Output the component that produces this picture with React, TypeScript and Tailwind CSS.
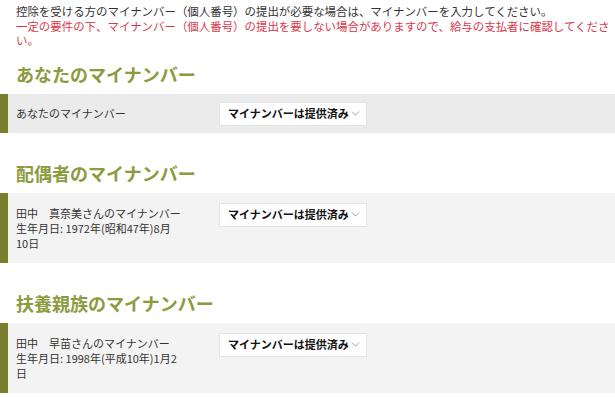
import { ChevronDown } from "lucide-react";

type Row = {
	lines: string[];
	first?: boolean;
};

const MyNumberRow = ({ lines, first }: Row) => {
	return (
		<div className={`flex border-l-8 border-[#7a7e2c] ${first ? "bg-[#ebebeb] items-center pt-2 pb-[7px]" : "bg-[#f3f3f3] items-start pt-[13px] pb-3"}`}>
			<div className="w-[211px] pl-2 text-[11px] leading-[15px] text-[#333]">
				{lines.map((l) => (
					<div key={l}>{l}</div>
				))}
			</div>
			<div
				className={`flex h-6 w-[148px] items-center justify-between bg-white border border-[#e4e4e4] pl-2 pr-1 ${first ? "" : "-mt-[3px]"}`}
			>
				<span className="text-[11px] font-bold text-[#111]">マイナンバーは提供済み</span>
				<ChevronDown size={13} strokeWidth={1.3} className="text-[#777]" />
			</div>
		</div>
	);
};

const App = () => {
	return (
		<div className="w-[615px] h-[397px] overflow-hidden bg-white" style={{ fontFamily: '"Noto Sans CJK JP", "Noto Sans", sans-serif' }}>
			<div className="pt-1 pl-4 text-[11.45px] leading-[14.5px]">
				<p className="text-[#333]">控除を受ける方のマイナンバー（個人番号）の提出が必要な場合は、マイナンバーを入力してください。</p>
				<p className="text-[#d9374b]">
					一定の要件の下、マイナンバー（個人番号）の提出を要しない場合がありますので、給与の支払者に確認してください。
				</p>
			</div>

			<h2 className="mt-[14px] mb-2 pl-4 text-[18px] leading-6 font-bold text-[#8b9b3e]">あなたのマイナンバー</h2>
			<MyNumberRow first lines={["あなたのマイナンバー"]} />

			<h2 className="mt-7 mb-2 pl-4 text-[18px] leading-6 font-bold text-[#8b9b3e]">配偶者のマイナンバー</h2>
			<MyNumberRow lines={["田中　真奈美さんのマイナンバー", "生年月日: 1972年(昭和47年)8月", "10日"]} />

			<h2 className="mt-7 mb-2 pl-4 text-[18px] leading-6 font-bold text-[#8b9b3e]">扶養親族のマイナンバー</h2>
			<MyNumberRow lines={["田中　早苗さんのマイナンバー", "生年月日: 1998年(平成10年)1月2", "日"]} />
		</div>
	);
};

export default App;
